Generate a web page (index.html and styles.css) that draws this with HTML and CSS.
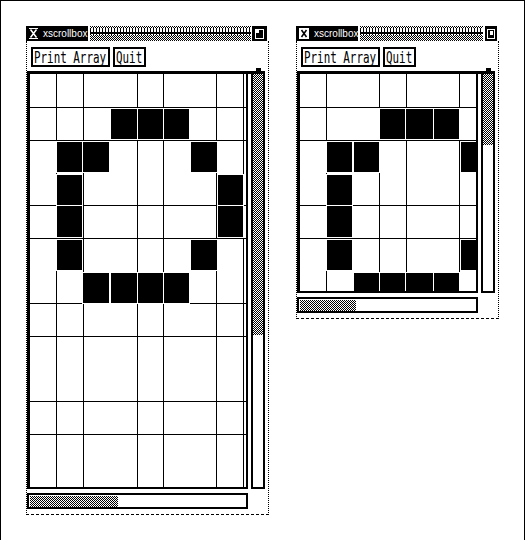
FILE: index.html
```html
<!DOCTYPE html>
<html>
<head>
<meta charset="utf-8">
<title>xscrollbox</title>
<link rel="stylesheet" href="styles.css">
</head>
<body>
<svg class="defs" width="0" height="0" aria-hidden="true">
  <defs>
    <pattern id="chk" width="2" height="2" patternUnits="userSpaceOnUse">
      <rect width="2" height="2" fill="#fff"/>
      <rect width="1" height="1" fill="#000"/>
      <rect x="1" y="1" width="1" height="1" fill="#000"/>
    </pattern>
    <pattern id="ovals" width="3" height="7" patternUnits="userSpaceOnUse">
      <rect width="3" height="7" fill="#000"/>
      <rect x="1" y="1" width="2" height="5" fill="#fff"/>
    </pattern>
  </defs>
</svg>
<div class="screen">

  <div class="win win1">
    <div class="titlebar">
      <div class="tb-label">
        <svg class="ico" width="9" height="11" viewBox="0 0 9 11"><path d="M0 .5h9M0 10.5h9" stroke="#fff"/><path d="M1.5 1.5 7.5 9.5M7.5 1.5 1.5 9.5" stroke="#fff" stroke-width="1.5"/></svg>
        <span class="tb-text">xscrollbox</span>
      </div>
      <div class="tb-stipple">
        <svg width="100%" height="15" shape-rendering="crispEdges"><rect width="100%" height="15" fill="url(#chk)"/><rect y="2" width="100%" height="7" fill="url(#ovals)"/></svg>
      </div>
      <div class="tb-box">
        <svg width="9" height="10" viewBox="0 0 9 10"><rect x=".5" y=".5" width="8" height="9" fill="none" stroke="#fff"/><rect x="1" y="1" width="3" height="3" fill="#fff"/></svg>
      </div>
    </div>
    <div class="body">
      <div class="buttons">
        <div class="btn btn-print"><span>Print Array</span></div>
        <div class="btn btn-quit"><span>Quit</span></div>
      </div>
      <div class="pane">
        <div class="viewport">
          <svg class="grid" width="216" height="413" viewBox="0 0 216 413" shape-rendering="crispEdges">
            <g fill="#000">
              <rect x="26" y="0" width="1" height="413"/>
              <rect x="53" y="0" width="1" height="413"/>
              <rect x="107" y="0" width="1" height="413"/>
              <rect x="133" y="0" width="1" height="413"/>
              <rect x="186" y="0" width="1" height="413"/>
              <rect x="213" y="0" width="1" height="413"/>
              <rect x="0" y="33" width="216" height="1"/>
              <rect x="0" y="66" width="216" height="1"/>
              <rect x="0" y="131" width="216" height="1"/>
              <rect x="0" y="164" width="216" height="1"/>
              <rect x="0" y="229" width="216" height="1"/>
              <rect x="0" y="262" width="216" height="1"/>
              <rect x="0" y="327" width="216" height="1"/>
              <rect x="0" y="360" width="216" height="1"/>
            </g>
            <g fill="#fff">
              <rect x="80" y="34" width="28" height="32"/>
              <rect x="107" y="34" width="27" height="32"/>
              <rect x="133" y="34" width="27" height="32"/>
              <rect x="26" y="67" width="27" height="32"/>
              <rect x="52" y="67" width="28" height="32"/>
              <rect x="160" y="67" width="28" height="32"/>
              <rect x="26" y="100" width="27" height="32"/>
              <rect x="187" y="100" width="27" height="32"/>
              <rect x="26" y="131" width="27" height="33"/>
              <rect x="187" y="131" width="27" height="33"/>
              <rect x="26" y="165" width="27" height="32"/>
              <rect x="160" y="165" width="28" height="32"/>
              <rect x="52" y="198" width="28" height="32"/>
              <rect x="80" y="198" width="28" height="32"/>
              <rect x="107" y="198" width="27" height="32"/>
              <rect x="133" y="198" width="27" height="32"/>
            </g>
            <g fill="#000">
              <rect x="81" y="35" width="26" height="30"/>
              <rect x="108" y="35" width="25" height="30"/>
              <rect x="134" y="35" width="25" height="30"/>
              <rect x="27" y="68" width="25" height="30"/>
              <rect x="53" y="68" width="26" height="30"/>
              <rect x="161" y="68" width="26" height="30"/>
              <rect x="27" y="101" width="25" height="30"/>
              <rect x="188" y="101" width="25" height="30"/>
              <rect x="27" y="132" width="25" height="31"/>
              <rect x="188" y="132" width="25" height="31"/>
              <rect x="27" y="166" width="25" height="30"/>
              <rect x="161" y="166" width="26" height="30"/>
              <rect x="53" y="199" width="26" height="30"/>
              <rect x="81" y="199" width="26" height="30"/>
              <rect x="108" y="199" width="25" height="30"/>
              <rect x="134" y="199" width="25" height="30"/>
            </g>
          </svg>
        </div>
        <div class="vscroll">
          <div class="nub"></div>
          <svg class="thumb" width="10" height="261" shape-rendering="crispEdges"><rect width="10" height="261" fill="url(#chk)"/></svg>
        </div>
      </div>
      <div class="hscroll">
        <svg class="thumb hthumb" width="88" height="11" shape-rendering="crispEdges"><rect width="88" height="11" fill="url(#chk)"/></svg>
      </div>
    </div>
  </div>

  <div class="win win2">
    <div class="titlebar">
      <div class="tb-label">
        <svg class="ico" width="10" height="11" viewBox="0 0 10 11"><rect width="10" height="11" fill="#fff"/><path d="M2.5 2 7.5 9M7.5 2 2.5 9" stroke="#000" stroke-width="1.5"/></svg>
        <span class="tb-text">xscrollbox</span>
      </div>
      <div class="tb-stipple">
        <svg width="100%" height="15" shape-rendering="crispEdges"><rect width="100%" height="15" fill="url(#chk)"/><rect y="2" width="100%" height="7" fill="url(#ovals)"/></svg>
      </div>
      <div class="tb-box">
        <svg width="8" height="10" viewBox="0 0 8 10"><rect x=".5" y=".5" width="7" height="9" fill="none" stroke="#fff"/><rect x="3" y="2" width="3" height="4" fill="#fff"/></svg>
      </div>
    </div>
    <div class="body">
      <div class="buttons">
        <div class="btn btn-print"><span>Print Array</span></div>
        <div class="btn btn-quit"><span>Quit</span></div>
      </div>
      <div class="pane">
        <div class="viewport">
          <svg class="grid" width="176" height="217" viewBox="0 0 176 217" shape-rendering="crispEdges">
            <g fill="#000">
              <rect x="26" y="0" width="1" height="217"/>
              <rect x="79" y="0" width="1" height="217"/>
              <rect x="106" y="0" width="1" height="217"/>
              <rect x="159" y="0" width="1" height="217"/>
              <rect x="0" y="33" width="176" height="1"/>
              <rect x="0" y="66" width="176" height="1"/>
              <rect x="0" y="131" width="176" height="1"/>
              <rect x="0" y="164" width="176" height="1"/>
            </g>
            <g fill="#fff">
              <rect x="79" y="34" width="27" height="32"/>
              <rect x="105" y="34" width="29" height="32"/>
              <rect x="133" y="34" width="27" height="32"/>
              <rect x="26" y="67" width="27" height="32"/>
              <rect x="53" y="67" width="27" height="32"/>
              <rect x="160" y="67" width="28" height="32"/>
              <rect x="26" y="100" width="27" height="32"/>
              <rect x="26" y="131" width="27" height="33"/>
              <rect x="26" y="165" width="27" height="32"/>
              <rect x="160" y="165" width="28" height="32"/>
              <rect x="53" y="198" width="27" height="32"/>
              <rect x="79" y="198" width="27" height="32"/>
              <rect x="105" y="198" width="29" height="32"/>
              <rect x="133" y="198" width="27" height="32"/>
            </g>
            <g fill="#000">
              <rect x="80" y="35" width="25" height="30"/>
              <rect x="106" y="35" width="27" height="30"/>
              <rect x="134" y="35" width="25" height="30"/>
              <rect x="27" y="68" width="25" height="30"/>
              <rect x="54" y="68" width="25" height="30"/>
              <rect x="161" y="68" width="26" height="30"/>
              <rect x="27" y="101" width="25" height="30"/>
              <rect x="27" y="132" width="25" height="31"/>
              <rect x="27" y="166" width="25" height="30"/>
              <rect x="161" y="166" width="26" height="30"/>
              <rect x="54" y="199" width="25" height="30"/>
              <rect x="80" y="199" width="25" height="30"/>
              <rect x="106" y="199" width="27" height="30"/>
              <rect x="134" y="199" width="25" height="30"/>
            </g>
          </svg>
        </div>
        <div class="vscroll">
          <div class="nub"></div>
          <svg class="thumb" width="10" height="71" shape-rendering="crispEdges"><rect width="10" height="71" fill="url(#chk)"/></svg>
        </div>
      </div>
      <div class="hscroll">
        <svg class="thumb hthumb" width="56" height="11" shape-rendering="crispEdges"><rect width="56" height="11" fill="url(#chk)"/></svg>
      </div>
    </div>
  </div>

</div>
</body>
</html>
```

FILE: styles.css
```css
* { box-sizing: border-box; margin: 0; padding: 0; }
html, body { width: 525px; height: 540px; background: #fff; overflow: hidden; }

.defs { position: absolute; width: 0; height: 0; overflow: hidden; }

.screen {
  position: relative;
  width: 525px;
  height: 540px;
  border: 1px solid #000;
  border-bottom: 0;
}

.win {
  position: absolute;
  top: 25px;
  display: flex;
  flex-direction: column;
}
.win1 { left: 25px; width: 243px; height: 489px; }
.win2 { left: 295px; width: 203px; height: 293px; }

/* title bar */
.titlebar { height: 15px; display: flex; flex: none; }
.win1 .titlebar { width: 241px; }
.win2 .titlebar { width: 201px; }

.tb-label {
  width: 62px;
  background: #000;
  display: flex;
  align-items: center;
  gap: 5px;
  padding-left: 3px;
  color: #fff;
  font: 10px/1 "Liberation Sans", Arial, sans-serif;
  white-space: nowrap;
  overflow: hidden;
}
.ico { flex: none; display: block; }
.tb-stipple {
  flex: 1;
  margin: 0 1px 0 2px;
  overflow: hidden;
}
.tb-stipple svg { display: block; }
.tb-box {
  background: #000;
  display: flex;
  align-items: center;
  justify-content: center;
}
.win1 .tb-box { width: 15px; }
.win2 .tb-box { width: 12px; margin-left: 1px; }
.tb-box svg { display: block; }

/* window body */
.body {
  flex: 1;
  display: flex;
  flex-direction: column;
  border-left: 1px dotted #000;
  border-right: 1px dotted #000;
  border-bottom: 1px dashed #000;
}

.buttons {
  height: 30px;
  flex: none;
  display: flex;
  gap: 3px;
  padding: 6px 0 0 4px;
}
.btn {
  height: 20px;
  border: 2px solid #000;
  padding: 0 0 0 1px;
  overflow: visible;
  font: 16px/16px "DejaVu Sans Mono", "Liberation Mono", monospace;
  color: #000;
  white-space: nowrap;
}
.btn span {
  display: inline-block;
  transform: scaleX(0.68);
  transform-origin: 0 0;
  margin-top: 1px;
}
.btn-print { width: 79px; }
.btn-quit { width: 33px; }

/* scrolled pane */
.pane {
  flex: none;
  display: flex;
  gap: 3px;
  border-top: 3px solid #000;
}
.win1 .pane { width: 238px; height: 418px; }
.win2 .pane { width: 198px; height: 222px; }

.viewport {
  border-left: 3px solid #000;
  border-right: 2px solid #000;
  border-bottom: 2px solid #000;
  overflow: hidden;
  background: #fff;
}
.win1 .viewport { width: 221px; }
.win2 .viewport { width: 181px; }
.grid { display: block; }

.vscroll {
  position: relative;
  width: 14px;
  border: 2px solid #000;
  border-top: 0;
}
.nub {
  position: absolute;
  top: -6px;
  left: 3px;
  width: 5px;
  height: 3px;
  background: #000;
}
.thumb { display: block; }

.hscroll {
  flex: none;
  margin-top: 4px;
  height: 16px;
  border: 2px solid #000;
}
.win1 .hscroll { width: 221px; }
.win2 .hscroll { width: 181px; }
.hthumb { margin: 1px 0 0 1px; }
```
